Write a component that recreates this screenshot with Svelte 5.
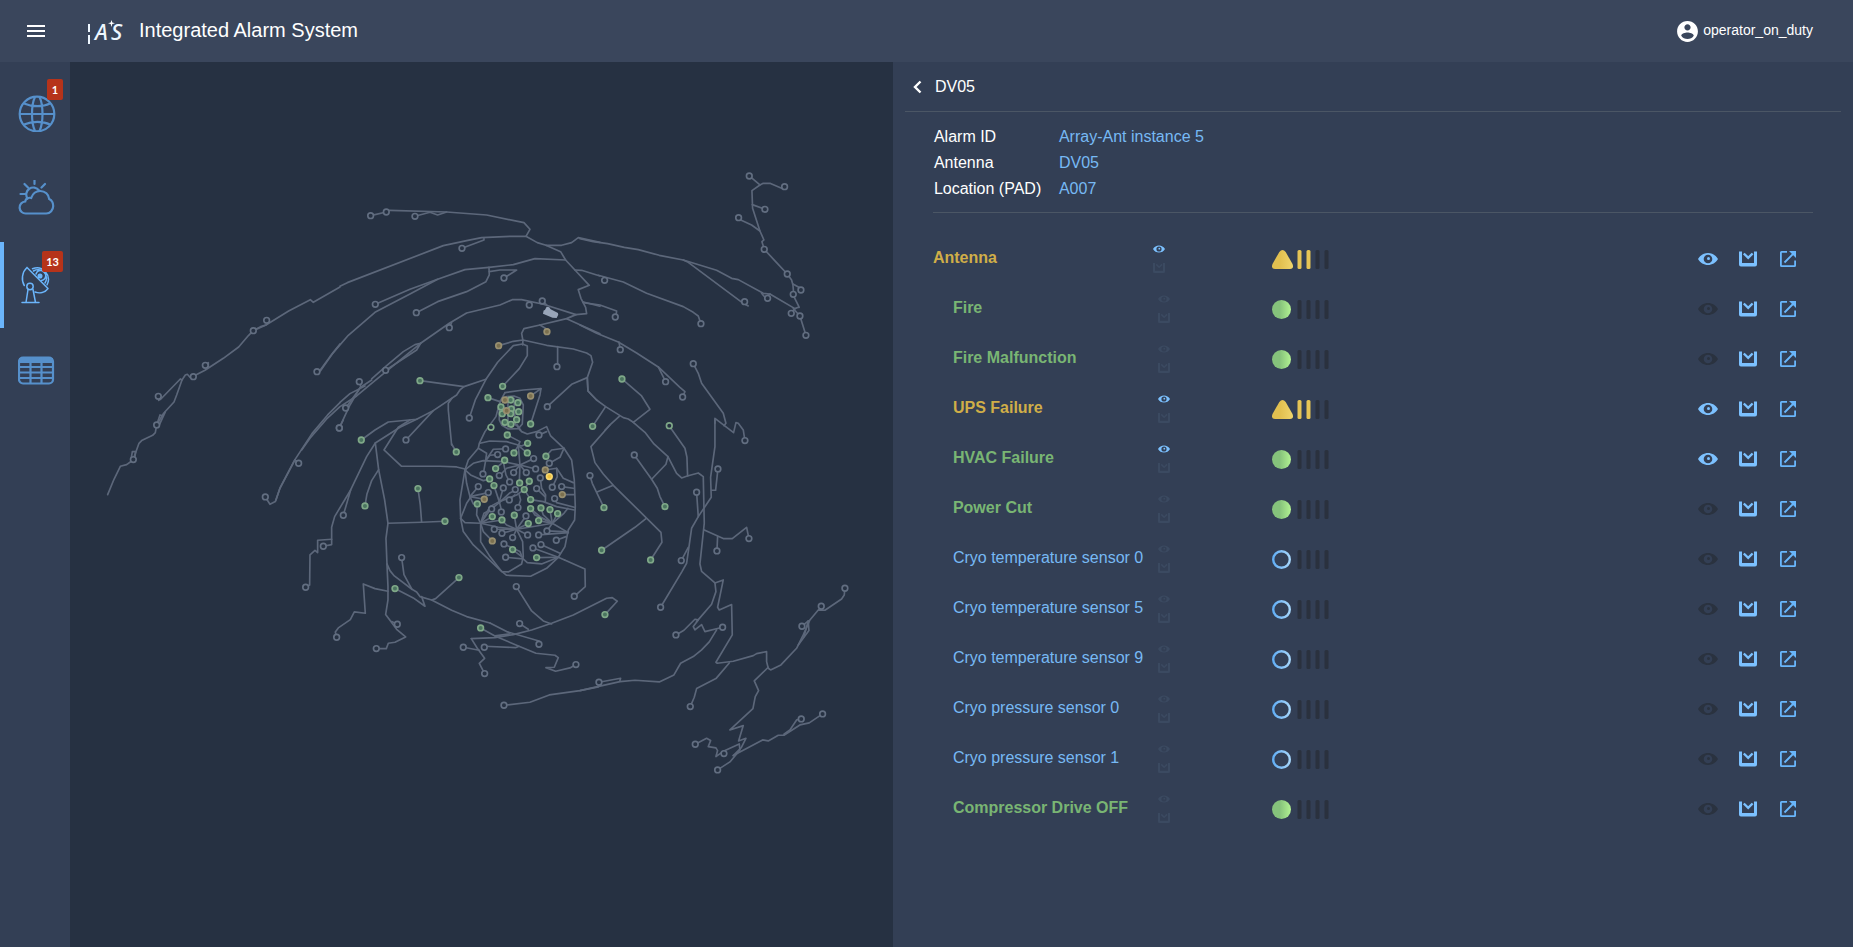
<script>
  // Road and antenna pad survey, split in sectors. Every sector has its own
  // origin on the map, and its coordinates are given in thirds of a map unit.
  const sectors = [
    {
      x: 100, y: 200,
      roads: [
        '23,884 42,838 61,799 80,794 99,780 117,730 125,722 158,706 166,698 170,675 191,640 222,606 230,585 246,540 241,537 182,598 176,601',
        '246,540 256,525 262,523 270,532 280,529 315,511 370,475 416,441 446,406 460,392 498,375 566,333 631,299 640,307 720,261',
        '104,776 107,755 97,755 92,785', '170,675 180,645 190,648 178,675 196,636', '316,496 325,488 325,500',
        '460,392 482,380 498,375', '651,515 661,510 690,470 720,432', '720,608 683,645 636,701 583,782 540,864 528,900'
      ],
      pads: ['175,589', '100,779', '170,675', '280,530', '316,496', '460,392', '500,361', '651,515']
    },
    {
      x: 300, y: 190,
      roads: [
        '120,289 142,278 430,167 500,152 545,143 630,139 678,139 712,158 738,166 782,185 797,210 825,240 868,286 835,299 843,325 857,352 860,371 828,374 800,386 720,405 672,416 665,430 669,452 668,465',
        '678,139 690,118 672,98 560,75 440,66 270,61 259,66 212,77', '345,79 390,67 413,75 440,66', '486,175 552,150 552,146',
        '738,166 785,166 815,158 835,143 900,157',
        '797,210 705,206 640,224 567,232 495,239 413,268 330,312 225,367 145,436 100,488 61,543',
        '226,343 330,298 413,268', '567,232 568,255 558,275 500,305 413,335 349,368', '568,245 600,240 650,240 612,264',
        '825,240 845,241 900,258', '828,374 730,343 665,329 637,329 600,345 500,369 448,400 362,460 270,535 215,580 170,618 120,650 80,687 30,745 5,780',
        '448,413 455,398', '362,460 345,464 310,485 260,527 215,567', '257,541 350,480 362,460', '178,575 182,590 150,645 118,714',
        '137,654 182,592 215,570', '120,637 150,611 195,588', '850,336 900,349', '800,386 900,431', '720,405 741,418', '727,333 740,345',
        '596,467 640,454 669,450 740,466 820,477 860,489 873,497 878,517 862,563 864,603 890,630', '773,470 773,530', '862,563 815,583 742,650',
        '668,462 640,467 593,517 558,568 526,630 508,684', '668,462 682,468 682,497 658,536 608,589', '360,572 492,590 558,568',
        '492,590 480,600 470,615 400,662 350,688 265,696 225,720 184,750', '400,662 318,750', '456,625 445,640 445,660 455,765'
      ],
      pads: ['212,77', '259,66', '345,79', '486,175', '612,264', '226,343', '349,368', '688,345', '727,333', '448,413', '257,541', '178,575', '137,654', '118,714', '771,530', '742,650', '508,684', '318,750', '717,735',
        '741,425 warn', '596,467 warn', '360,572 ok', '608,589 ok']
    },
    {
      x: 580, y: 160,
      roads: [
        '0,236 40,245 83,251 133,262 175,269 238,286 310,300 410,331 455,355 475,359 550,400 570,402 645,446 655,442 658,442 642,410 639,375 635,360 622,342 590,308 553,268 546,245 552,240 540,213 518,145 516,92 540,75 508,48',
        '540,75 550,70 570,70 605,85 614,80', '517,134 555,148', '540,213 515,195 476,177', '639,372 662,385', '645,446 634,460', '640,446 660,468 678,526',
        '310,300 325,307 490,430 505,438', '545,400 555,412 570,402', '55,346 130,366 200,400 310,440 340,457 355,468 363,491',
        '10,428 60,435 110,453 108,471', '0,495 50,520 115,546 170,579 235,621 300,682 315,695 308,711', '117,546 121,568', '235,621 257,665',
        '22,653 24,693 50,720 77,740 130,773 145,777 160,787', '126,657 185,708 210,748 160,787', '77,740 38,799', '118,769 90,795 75,811',
        '340,611 355,640 365,670 430,760 438,790 432,797', '405,790 405,775 461,818 468,788 475,790 490,810 495,842'
      ],
      pads: ['508,48', '614,80', '555,148', '476,173', '553,268', '622,342', '663,390', '640,403', '563,415', '634,460', '660,468', '678,526', '494,425', '74,361', '106,471', '363,491', '121,569', '257,665', '308,711', '340,611', '495,842',
        '126,657 ok', '38,799 ok', '268,797 ring']
    },
    {
      x: 580, y: 420,
      roads: [
        '160,7 195,37 222,72 264,110 290,160 305,174 322,168 355,159 370,170 373,310 360,432 365,454 405,489 408,515 395,553 350,605',
        '90,15 33,80 45,128 70,162 100,196 243,337 246,367 212,420', '100,196 51,216', '30,167 37,190 72,263', '198,296 165,322 65,391',
        '163,105 215,178 232,205 240,230 255,260', '215,178 258,133 264,110', '268,18 315,85 321,112 323,168',
        '405,0 405,80 392,172 394,232 355,290 335,325 328,375 320,430 306,455 242,562', '414,147 407,211 395,211', '350,217 355,290', '325,382 304,422',
        '373,330 430,356 457,356 500,322 507,356', '413,350 411,393',
        '405,489 430,480 413,562 418,570 455,554 457,645 408,727 412,730 460,724 520,707 530,701 560,695 560,725 565,745 572,750 603,735 650,685 670,645 690,600 715,570 735,571 785,537 793,525 795,505',
        '448,729 408,776 350,806 343,832 331,860', '288,645 312,631 345,598 355,600 340,620 345,630 365,614 375,635 428,622',
        '410,630 388,666 365,690 340,710 302,730 282,765 238,786 165,781 120,785 50,801 0,812', '57,787 122,775 120,782',
        '666,619 685,603 687,632 655,675', '672,650 685,603', '565,742 523,783 536,812 526,830 519,866 450,930 490,917 476,963 498,955 484,983 460,1007',
        '413,1050 450,1026 480,990 478,972 432,993 408,1010 413,992 408,984 385,980 392,962 380,955 346,973',
        '460,1007 548,960 565,963 595,946 612,946 660,915 688,909 728,882', '612,943 630,930 650,900 664,897'
      ],
      pads: ['163,105', '30,167', '414,147', '350,217', '507,356', '411,393', '304,422', '242,562', '288,645', '428,622', '724,559', '795,505', '666,619', '331,860', '57,787', '664,897', '728,882', '346,973', '432,1001', '413,1050',
        '72,263 ok', '255,260 ok', '65,391 ok', '212,420 ok']
    },
    {
      x: 250, y: 420,
      roads: [
        '500,-2 450,22 376,69 386,149 404,240 414,310 408,355 411,432 414,500 414,540 407,584 425,608 440,628 467,651 435,667 415,670 409,686 379,686',
        '480,0 445,22 402,90 455,139 570,139 620,141 648,148', '376,69 350,110 302,210 254,290 245,322 245,374 220,379',
        '245,358 203,361 203,398 195,391 180,405 179,495 167,502', '302,210 280,286', '386,149 365,182 351,222 345,258', '414,310 515,307 585,304',
        '504,206 511,255 515,307', '455,413 462,464 486,508', '411,432 420,452 433,468 486,508 500,516 510,530 545,540 605,571 650,590 720,609',
        '515,530 525,559 490,534 435,506', '545,540 557,536 627,473', '414,514 375,506 340,492 346,580 313,576 301,599 265,624 256,636 260,652',
        '442,613 425,605', '135,120 90,205 76,245 60,253 46,231', '135,120 146,130', '280,0 268,24', '605,72 619,96'
      ],
      pads: ['268,24', '146,130', '46,231', '280,286', '220,379', '167,502', '455,413', '442,613', '260,652', '379,686',
        '334,60 ok', '619,96 ok', '345,258 ok', '504,206 ok', '585,304 ok', '627,473 ok', '435,506 ok']
    },
    {
      x: 440, y: 560,
      roads: [
        '150,189 200,215 297,243 297,253', '122,204 165,228 237,259 288,280 345,286 355,293 343,322 318,323 347,334 390,324 408,314',
        '94,236 165,233 220,224 275,210 335,190 400,165 500,115 517,113 532,124 495,164', '165,228 210,222', '229,80 275,153 310,183 335,192', '239,191 265,208',
        '94,236 112,265 134,295 118,310 134,341', '70,262 118,271', '133,259 228,263 237,259', '374,0 435,27 436,80 403,109', '192,436 270,427 328,405 420,392 475,381'
      ],
      pads: ['229,80', '403,109', '239,191', '297,253', '70,262', '133,262', '134,341', '408,314', '192,436', '122,204 ok', '495,164 ok']
    },
    {
      x: 440, y: 360,
      roads: [
        '195,98 180,125 168,170 135,215 118,250 115,265 85,300 75,330 60,420 62,475 70,515 100,555 180,630 200,646 272,649 320,625 355,592 375,560 385,510 404,480 406,440 403,360 395,300 372,265 332,228 320,200 290,215 262,222 245,215 225,190 242,210',
        '195,98 250,90 303,86 300,105 272,192', '272,108 303,86', '144,113 180,125', '180,125 178,150 178,180 186,196 205,207 235,206 247,192 250,135 240,115 222,108 200,110 180,125', '204,120 204,200', '222,115 226,195', '184,140 245,160', '232,195 240,210',
        '120,250 150,243 200,245 245,258 263,250', '202,225 240,245 235,257', '235,257 262,279', '235,257 222,279',
        '75,330 100,310 130,302 190,305 240,315 287,327', '115,265 140,280 137,302 130,342', '137,302 160,268 197,267', '240,315 235,257', '137,302 150,286 173,284',
        '240,315 281,296', '240,315 221,338', '240,315 259,338', '240,315 238,369', '178,348 200,325 240,315', '190,305 198,345 209,366', '167,326 185,310',
        '75,330 92,345 130,362 149,357', '75,330 80,370 90,410 100,432 112,432', '90,410 115,380', '90,410 145,398', '90,410 133,418', '62,475 80,430 92,412', '62,475 75,488 122,490',
        '112,432 110,465 122,490', '122,490 132,460 155,448', '122,490 157,470', '122,490 186,480', '122,490 130,515 157,543', '122,490 150,450 178,428 208,400 227,390',
        '178,425 162,377', '178,425 190,384', '178,425 230,405 253,389', '178,425 186,457', '122,490 150,440 178,425',
        '230,508 186,520', '230,508 163,508', '230,508 218,533', '230,508 263,525', '230,508 265,491', '230,508 223,466', '230,508 258,468', '230,508 200,495 186,480',
        '122,490 175,502 230,508 290,498 337,490 372,460 384,445', '230,508 248,545 250,590 245,612 205,636 185,635 150,590 122,545 122,490',
        '337,490 285,465 272,446', '337,490 310,465 303,444', '337,490 330,449', '337,490 353,461', '337,490 321,513', '272,446 300,470 337,490 385,518', '296,482 337,490',
        '318,289 335,270 372,265', '328,310 360,292 372,265', '316,330 350,325 370,355 400,368', '337,382 352,350 350,325', '365,380 400,385', '367,404 403,404',
        '344,416 350,428 403,442', '272,419 310,425 350,440 403,450', '301,354 305,385 317,405 316,425', '290,386 315,410', '268,364 253,389', '296,525 385,518',
        '349,541 378,530', '303,554 360,580', '279,564 355,592 374,600', '290,593 355,592', '197,592 248,597', '192,552 240,575 248,595 262,608 305,612 355,592',
        '218,569 245,590', '234,443 242,420 238,405', '297,225 320,215', '272,419 253,389', '321,513 385,516', '208,420 225,405'
      ],
      pads: ['197,267', '173,284', '281,296', '328,310', '129,342', '178,347', '221,338', '259,338', '287,327', '301,354', '209,366', '115,380', '190,384', '145,398', '226,389', '290,386', '337,382', '365,380', '344,416', '208,420', '234,443', '155,447', '184,456', '258,468', '163,508', '186,520', '218,533', '263,525', '296,525', '321,513', '349,541', '192,552', '303,554', '279,564', '197,592',
        '144,113 ok', '212,120 ok', '234,128 ok', '183,141 ok', '214,147 ok', '236,155 ok', '187,161 ok', '212,161 ok', '230,179 ok', '195,187 ok', '213,193 ok', '272,192 ok', '202,225 ok', '263,250 ok', '262,279 ok', '222,279 ok', '318,289 ok', '194,301 ok', '167,326 ok', '149,357 ok', '162,377 ok', '239,369 ok', '268,364 ok', '253,389 ok', '272,419 ok', '112,432 ok', '157,470 ok', '186,480 ok', '223,466 ok', '272,446 ok', '303,444 ok', '330,449 ok', '353,461 ok', '296,482 ok', '265,491 ok', '218,569 ok', '290,593 ok',
        '153,202 ring', '195,120 warn', '200,152 warn', '272,108 warn', '316,330 warn', '133,418 warn', '367,404 warn', '157,543 warn', '328,350 selected']
    }
  ];

  function pad(text) {
    const [point, state = 'idle'] = text.split(' ');
    const [cx, cy] = point.split(',');
    return { cx, cy, state };
  }

  const details = [
    ['Alarm ID', 'Array-Ant instance 5'],
    ['Antenna', 'DV05'],
    ['Location (PAD)', 'A007']
  ];

  const alarms = [
    { name: 'Antenna', state: 'set', parent: true, seen: true },
    { name: 'Fire', state: 'clear' },
    { name: 'Fire Malfunction', state: 'clear' },
    { name: 'UPS Failure', state: 'set', seen: true },
    { name: 'HVAC Failure', state: 'clear', seen: true },
    { name: 'Power Cut', state: 'clear' },
    { name: 'Cryo temperature sensor 0', state: 'unknown' },
    { name: 'Cryo temperature sensor 5', state: 'unknown' },
    { name: 'Cryo temperature sensor 9', state: 'unknown' },
    { name: 'Cryo pressure sensor 0', state: 'unknown' },
    { name: 'Cryo pressure sensor 1', state: 'unknown' },
    { name: 'Compressor Drive OFF', state: 'clear' }
  ];
</script>

{#snippet eye(size)}
  <svg width={size} height={size} viewBox="0 0 20 20" aria-hidden="true">
    <path fill="currentColor" fill-rule="evenodd" d="M0 10C2 6.200 6 4 10 4s8 2.200 10 6c-2 3.800-6 6-10 6S2 13.800 0 10zm10-4.300a4.300 4.300 0 1 0 0 8.600 4.300 4.300 0 0 0 0-8.600z" />
    <circle cx="10.500" cy="9.500" r="1.500" fill="currentColor" />
  </svg>
{/snippet}

{#snippet ack(size)}
  <svg width={size} height={size} viewBox="0 0 18 18" aria-hidden="true">
    <path fill="currentColor" d="M0 1.500h3v11.500h12v-11.500h3v13a2 2 0 0 1-2 2h-14a2 2 0 0 1-2-2z" />
    <path fill="none" stroke="currentColor" stroke-width="2.400" d="M4.800 3.500l4.400 4.300 4.400-4.300" />
  </svg>
{/snippet}

<div class="app">
  <header>
    <button class="menu" aria-label="Menu">
      <svg width="24" height="24" viewBox="0 0 24 24" fill="currentColor"><path d="M3 18h18v-2H3zM3 13h18v-2H3zM3 6v2h18V6z" /></svg>
    </button>
    <svg class="logo" width="42" height="40" viewBox="0 0 42 40" role="img" aria-label="IAS">
      <path d="M3 11v8M3 22v9" stroke="#eef7ff" stroke-width="2" />
      <text x="9" y="27">A</text>
      <text x="25" y="27">S</text>
      <path d="M25.500 7l.8 2.400 2.700.8-2.700.8-.8 2.900-.8-2.900-2.700-.8 2.700-.8z" fill="#fff" />
    </svg>
    <h1>Integrated Alarm System</h1>
    <button class="user">
      <svg width="25" height="25" viewBox="0 0 24 24" fill="currentColor"><path d="M12 2C6.480 2 2 6.480 2 12s4.480 10 10 10 10-4.480 10-10S17.520 2 12 2zm0 3c1.660 0 3 1.340 3 3s-1.340 3-3 3-3-1.340-3-3 1.340-3 3-3zm0 14.200c-2.500 0-4.710-1.280-6-3.220.03-1.990 4-3.080 6-3.080 1.990 0 5.970 1.090 6 3.080-1.290 1.940-3.500 3.220-6 3.220z" /></svg>
      <span>operator_on_duty</span>
    </button>
  </header>

  <nav>
    <a href="#overview" aria-label="Overview">
      <svg width="38" height="38" viewBox="0 0 38 38" fill="none" stroke="currentColor" stroke-width="2.200">
        <circle cx="19" cy="20" r="17.300" />
        <path d="M2 20h35M17 3c-4 8-4 26 0 34M21.500 3c4 8 4 26 0 34M6 9.500c8 3.500 19 3.500 26 0M6 30.500c8-3.500 19-3.500 26 0" />
      </svg>
      <span class="badge">1</span>
    </a>
    <a href="#weather" aria-label="Weather">
      <svg width="38" height="38" viewBox="0 0 38 38" fill="none" stroke="currentColor" stroke-width="2.200" stroke-linecap="round">
        <path d="M8 33.500a6 6 0 0 1-.8-12c.5-3 3.300-4.300 6-3.500 1.500-4.500 5-7 9-7 5 0 8.500 3.500 9 8 3 1.500 4 4 4 7 0 4-3 7.500-7 7.500z" />
        <path d="M9.500 18.500a6.500 6.500 0 0 1 11.500-8M16.500 0v4M6.500 4l3.500 3.500M27 4l-3.500 3.500M2.500 14h4.500" />
      </svg>
    </a>
    <a href="#antennas" class="active" aria-label="Antennas">
      <svg width="38" height="38" viewBox="0 0 38 38" fill="none" stroke="currentColor" stroke-width="1.500" stroke-linecap="round" stroke-linejoin="round">
        <path d="M9 1.500L30 22.500c-3 4.300-8.500 5-13 3.500M6.300 19.500C3 14 4 6 9 1.500" />
        <circle cx="12" cy="20.500" r="3.200" />
        <path d="M4 36.500h17M8 36.500l2-13M17.500 36.500l-2.500-13M18 8a5 5 0 1 1 5.500 6.500M15.500 5a8.500 8.500 0 0 1 11.500 12M14.500 2.800a11.500 11.500 0 0 1 14.500 16M21 11l1.500-1.500" />
        <circle cx="22" cy="10" r="1.800" fill="currentColor" />
      </svg>
      <span class="badge">13</span>
    </a>
    <a href="#table" aria-label="Table">
      <svg width="38" height="38" viewBox="0 0 38 38" fill="none" stroke="currentColor" stroke-width="2.200">
        <rect x="1" y="5.500" width="34" height="26" rx="4" />
        <path d="M1 6h34v5H1z" fill="currentColor" stroke="none" />
        <path d="M1 15h34M1 20.500h34M1 26h34M12.500 5v26M23.500 5v26" />
      </svg>
    </a>
  </nav>

  <section class="map" aria-label="Antenna pads">
    <svg viewBox="70 62 823 880">
      {#each sectors as sector}
        <g transform="translate({sector.x} {sector.y}) scale(0.33333)">
          {#each sector.roads as road}<polyline points={road} />{/each}
        </g>
      {/each}
      {#each sectors as sector}
        <g transform="translate({sector.x} {sector.y}) scale(0.33333)">
          {#each sector.pads.map(pad) as p}<circle class={p.state} cx={p.cx} cy={p.cy} r="8.500" />{/each}
        </g>
      {/each}
      <path class="building" d="M546.700 306.700l2.600.6 1.400 2 7.300 3.700.3 1.700-1.600 3.300-4.200-.3-9.500-4 .7-3.200 1.300-.5z" />
    </svg>
  </section>

  <main>
    <div class="title">
      <button aria-label="Back">
        <svg width="12" height="16" viewBox="0 0 12 16" fill="none" stroke="currentColor" stroke-width="2.400"><path d="M8.500 2.500L3 8l5.500 5.500" /></svg>
      </button>
      <h2>DV05</h2>
    </div>
    <div class="body">
      <dl>
        {#each details as [label, value]}
          <dt>{label}</dt>
          <dd>{value}</dd>
        {/each}
      </dl>
      <ul>
        {#each alarms as alarm}
          <li class={alarm.state} class:parent={alarm.parent}>
            <span class="name">{alarm.name}</span>
            <span class="flags">
              <i class:on={alarm.seen}>{@render eye(12)}</i>
              <i>{@render ack(12)}</i>
            </span>
            <svg class="status" width="58" height="20" viewBox="0 0 58 20" role="img" aria-label={alarm.state}>
              <defs>
                <linearGradient id="clear"><stop offset=".4" stop-color="#85c27b" /><stop offset="1" stop-color="#b2f292" /></linearGradient>
                <linearGradient id="set"><stop offset=".4" stop-color="#e2c050" /><stop offset="1" stop-color="#f0d56c" /></linearGradient>
                <linearGradient id="unknown"><stop offset="0" stop-color="#62aef5" /><stop offset="1" stop-color="#a5d5fa" /></linearGradient>
              </defs>
              {#if alarm.state === 'set'}
                <path d="M7.300 2q3.200-4 6.400 0l6.800 12q1.800 5-2.500 5h-15q-4.300 0-2.500-5z" fill="url(#set)" />
              {:else if alarm.state === 'clear'}
                <circle cx="9.500" cy="9.500" r="9.500" fill="url(#clear)" />
              {:else}
                <circle cx="9.500" cy="9.500" r="8.300" fill="none" stroke="url(#unknown)" stroke-width="2.400" />
              {/if}
              {#each [0, 1, 2, 3] as bar}
                <rect x={25.5 + bar * 9} y="0" width="4" height="19" rx="1.500" fill={alarm.state === 'set' && bar < 2 ? '#e6c455' : '#2a313e'} />
              {/each}
            </svg>
            <span class="actions">
              <button class="see" class:on={alarm.seen} aria-label="Acknowledged">{@render eye(20)}</button>
              <button aria-label="Shelve">{@render ack(18)}</button>
              <button class="open" aria-label="Open details">
                <svg width="16" height="16" viewBox="0 0 16 16" fill="none" stroke="currentColor" stroke-width="1.800">
                  <path d="M7 .9H1.500a.6.6 0 0 0-.6.6v13a.6.6 0 0 0 .6.6h13a.6.6 0 0 0 .6-.6V9.500M4.500 11.500L14 2" />
                  <path d="M9 0h7v7l-2-2-3-3z" fill="currentColor" stroke="none" />
                </svg>
              </button>
            </span>
          </li>
        {/each}
      </ul>
    </div>
  </main>
</div>

<style>
  :global(body) { margin: 0; background: #333f55; }
  .app {
    display: grid;
    grid-template: 62px 1fr / 70px 6fr 7fr;
    min-height: 100vh;
    font: 16px/26px "Liberation Sans", Arial, sans-serif;
    color: #fff;
    background: #333f55;
  }
  button { display: flex; align-items: center; justify-content: center; padding: 0; border: 0; background: none; color: inherit; font: inherit; cursor: pointer; }
  svg { display: block; flex: none; }
  h1, h2 { margin: 0; font-weight: 400; }

  header { grid-column: 1 / -1; display: flex; align-items: center; padding: 0 40px 0 24px; background: #3a465c; }
  .logo { margin: 3px 11px 0 38px; }
  .logo text { font: italic 500 22px "Noto Sans", sans-serif; fill: #eef7ff; }
  h1 { padding-bottom: 2px; font-size: 20px; }
  .user { margin-left: auto; gap: 3px; font-size: 14px; }
  .user span { padding-bottom: 2px; }

  nav { display: flex; flex-direction: column; padding-top: 8px; }
  nav a { position: relative; display: flex; align-items: center; justify-content: center; height: 86px; padding-left: 4px; color: #5690cb; }
  nav a.active { color: #6bb5fb; box-shadow: inset 4px 0 #6bb5fb; }
  .badge { position: absolute; top: 9px; right: 7px; min-width: 8px; padding: 0 4px; border-radius: 2px; background: #b6331a; color: #fff; font: 700 11px/21px Lato, sans-serif; text-align: center; }

  .map { display: flex; background: #263142; }
  .map svg { width: 100%; align-self: flex-start; }
  polyline { fill: none; stroke: #5c677a; stroke-width: 5; stroke-linejoin: round; stroke-linecap: round; }
  circle.idle { fill: #263142; stroke: #626e81; stroke-width: 5; }
  circle.ok { fill: #4a745f; stroke: #7fa888; stroke-width: 5; }
  circle.ring { fill: #263142; stroke: #7fa888; stroke-width: 5; }
  circle.warn { fill: #7b704f; stroke: #988f70; stroke-width: 5; }
  circle.selected { fill: #f0c23f; stroke: #f8d970; stroke-width: 5; }
  .building { fill: #98a5b9; }

  .title { display: flex; align-items: center; height: 49px; margin: 0 12px; border-bottom: 1px solid #4b5665; }
  .title button { margin: 0 11px 0 7px; }
  h2 { font-size: 16px; }
  .body { padding: 0 40px; }
  dl { display: grid; grid-template-columns: 125px 1fr; margin: 0; padding: 12px 0 10px; border-bottom: 1px solid #4b5665; }
  dt { padding-left: 1px; }
  dd { margin: 0; padding-left: 1px; color: #77b9f4; }

  ul { margin: 21px 0 0; padding: 0; list-style: none; }
  li { display: grid; grid-template-columns: 25% 119px 1fr auto; align-items: center; height: 50px; }
  .name { padding: 0 0 2px 20px; white-space: nowrap; font-weight: 700; }
  .flags { display: grid; gap: 7px; padding: 0 0 2px 5px; }
  .parent .name, .parent .flags { padding-left: 0; }
  .status { margin-top: 2px; }
  .set .name { color: #d0ae48; }
  .clear .name { color: #79b573; }
  .unknown .name { font-weight: 400; color: #77b9f4; }
  i { color: #3b4a61; }
  i.on { color: #7cc1ff; }
  .actions { display: grid; grid-template-columns: repeat(3, 40px); padding-right: 5px; color: #7cc1ff; }
  .actions .see { color: #2a323f; }
  .actions .see.on { color: #7cc1ff; }
  .actions .open { color: #69b6fb; }
</style>
